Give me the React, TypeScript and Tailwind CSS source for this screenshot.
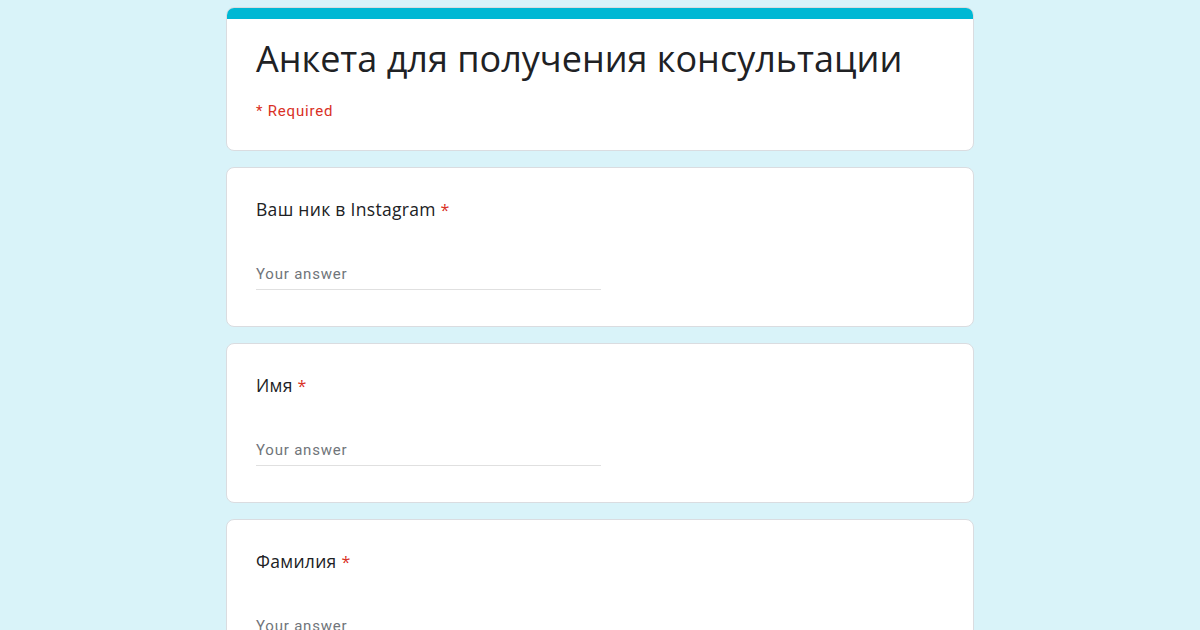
export default function App() {
  const questions = ["Ваш ник в Instagram", "Имя", "Фамилия"];
  return (
    <div className="min-h-[630px] h-[630px] overflow-hidden bg-[#d9f3f9] pt-[7px]" style={{ fontFamily: "Roboto, 'Noto Sans', sans-serif" }}>
      <div className="mx-auto w-[748px] flex flex-col gap-4">
        <div className="rounded-lg bg-white border border-[#dadce0] overflow-hidden h-[144px]">
          <div className="h-[11px] bg-[#00b8d4]"></div>
          <div className="px-[29px] pt-[16px]">
            <div className="text-[36px] leading-[48px] text-[#202124]" style={{ fontFamily: "'Open Sans', sans-serif" }}>
              Анкета для получения консультации
            </div>
            <div className="mt-[18px] text-[15px] leading-[20px] text-[#d93025] tracking-[0.8px]">* Required</div>
          </div>
        </div>
        {questions.map((q) => (
          <div key={q} className="rounded-lg bg-white border border-[#dadce0] h-[160px] px-[29px] pt-[29px]">
            <div className="text-[17.5px] leading-[24px] text-[#202124] tracking-[0.3px]" style={{ fontFamily: "'Open Sans', sans-serif" }}>
              {q} <span className="text-[#d93025] text-[16px]">*</span>
            </div>
            <div className="mt-[42px] w-[345px] border-b border-[#e0e0e0] pb-[5px] text-[15px] leading-[20px] text-[#70757a] tracking-[0.8px]">
              Your answer
            </div>
          </div>
        ))}
      </div>
    </div>
  );
}
